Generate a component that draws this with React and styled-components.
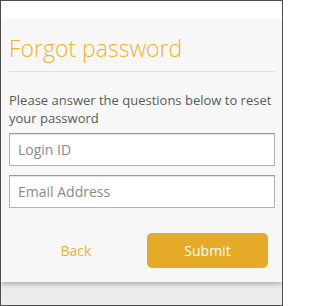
import React from 'react';
import styled, { createGlobalStyle } from 'styled-components';

const GlobalStyle = createGlobalStyle`
    html, body {
        margin: 0;
        padding: 0;
    }
    body {
        font-family: "Open Sans", "Liberation Sans", sans-serif;
    }
`;

const Frame = styled.div`
    box-sizing: border-box;
    width: 283px;
    height: 306px;
    border: 1px solid #4d4d4d;
    background: #ececec;
    display: flex;
    flex-direction: column;
    overflow: hidden;
`;

const TopStrip = styled.div`
    height: 20px;
    background: #ffffff;
`;

const Card = styled.div`
    background: #f7f7f7;
    box-shadow: 0 2px 5px rgba(0, 0, 0, 0.28);
    padding: 12px 7px 14px 8px;
    position: relative;
`;

const Title = styled.h1`
    margin: 0;
    font-size: 23px;
    font-weight: 300;
    line-height: 30px;
    color: #efb32e;
    padding-bottom: 8px;
    border-bottom: 1px solid #e1e1e1;
`;

const Intro = styled.p`
    margin: 19px 0 6px;
    font-size: 13px;
    line-height: 18px;
    color: #5a5a5a;
`;

const Field = styled.input`
    display: block;
    box-sizing: border-box;
    width: 100%;
    height: 33px;
    margin-bottom: ${p => p.$gap || 0}px;
    padding: 0 8px;
    border: 1px solid #b3b3b3;
    border-top-color: #9a9a9a;
    box-shadow: inset 0 1px 1px rgba(0, 0, 0, 0.12);
    background: #ffffff;
    font-family: inherit;
    font-size: 14px;
    color: #333;
    outline: none;

    &::placeholder {
        color: #8a8a8a;
    }
`;

const Actions = styled.div`
    display: grid;
    grid-template-columns: 1fr 121px;
    align-items: center;
    margin-top: 25px;
    padding-right: 7px;
`;

const LinkButton = styled.button`
    background: none;
    border: none;
    padding: 0;
    font-family: inherit;
    font-size: 14px;
    color: #efb32e;
    cursor: pointer;
    justify-self: center;
    margin-right: 4px;
`;

const PrimaryButton = styled.button`
    height: 35px;
    border: none;
    border-radius: 5px;
    background: #e4aa28;
    color: #ffffff;
    font-family: inherit;
    font-size: 14px;
    font-weight: 500;
    cursor: pointer;
`;

export default function App() {
    return (
        <>
            <GlobalStyle />
            <Frame>
                <TopStrip />
                <Card>
                    <Title>Forgot password</Title>
                    <Intro>Please answer the questions below to reset your password</Intro>
                    <Field placeholder="Login ID" $gap={9} />
                    <Field placeholder="Email Address" />
                    <Actions>
                        <LinkButton>Back</LinkButton>
                        <PrimaryButton>Submit</PrimaryButton>
                    </Actions>
                </Card>
            </Frame>
        </>
    );
}
